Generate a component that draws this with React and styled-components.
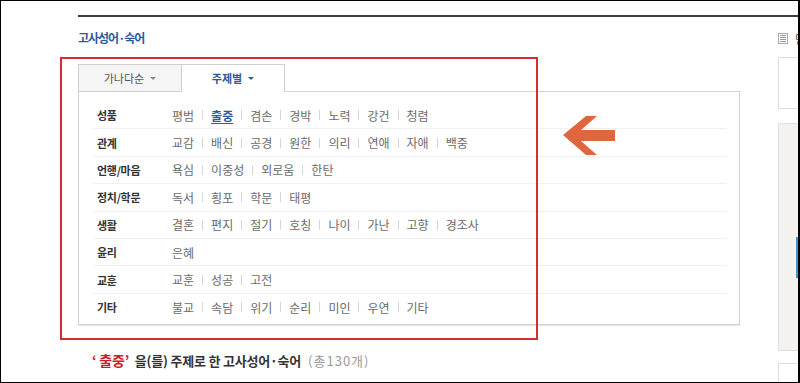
import React from 'react';
import styled, { createGlobalStyle } from 'styled-components';

const GlobalStyle = createGlobalStyle`
  body {
    margin: 0;
    background: #fff;
    font-family: 'Noto Sans CJK KR', 'Noto Sans', sans-serif;
  }
`;

const Frame = styled.div`
  position: relative;
  width: 800px;
  height: 383px;
  box-sizing: border-box;
  border: 1px solid #000;
  border-right-width: 2px;
  overflow: hidden;
  background: #fff;
`;

const TopRule = styled.div`
  margin: 14px 0 0 77px;
  height: 2px;
  background: #3d3d3d;
`;

const Body = styled.div`
  display: flex;
  padding-left: 77px;
`;

const Main = styled.div`
  width: 662px;
  flex-shrink: 0;
`;

const Title = styled.h2`
  margin: 13px 0 0;
  font-size: 12px;
  line-height: 16px;
  font-weight: bold;
  color: #2c5b9c;
  letter-spacing: -1px;
`;

const Tabs = styled.div`
  display: flex;
  margin-top: 18px;
`;

const Tab = styled.div`
  position: relative;
  z-index: ${(p) => (p.$active ? 2 : 1)};
  width: 104px;
  height: 28px;
  box-sizing: border-box;
  display: flex;
  align-items: center;
  justify-content: center;
  gap: 6px;
  border: 1px solid #cfcfcf;
  border-bottom: ${(p) => (p.$active ? '1px solid #fff' : '1px solid #cfcfcf')};
  margin-left: ${(p) => (p.$active ? '-1px' : '0')};
  margin-bottom: -1px;
  background: ${(p) => (p.$active ? '#fff' : '#f5f5f5')};
  color: ${(p) => (p.$active ? '#2c5b9c' : '#555')};
  font-size: 11px;
  font-weight: ${(p) => (p.$active ? 'bold' : 'normal')};

  &:after {
    content: '';
    border-left: 3px solid transparent;
    border-right: 3px solid transparent;
    border-top: 3px solid ${(p) => (p.$active ? '#2c5b9c' : '#888')};
  }
`;

const Panel = styled.div`
  position: relative;
  box-sizing: border-box;
  width: 662px;
  height: 234px;
  padding: 10px 12px 0 14px;
  border: 1px solid #d3d3d3;
  box-shadow: 0 1px 0 #e6e6e6;
`;

const Row = styled.div`
  display: flex;
  align-items: center;
  box-sizing: border-box;
  height: 27.4px;
  padding-left: 4px;
  border-bottom: ${(p) => (p.$last ? 'none' : '1px solid #f0f0f0')};
`;

const Label = styled.div`
  width: 75px;
  flex-shrink: 0;
  font-size: 11px;
  font-weight: bold;
  color: #333;
  letter-spacing: -0.3px;
`;

const Items = styled.div`
  display: flex;
  align-items: center;
`;

const Item = styled.span`
  font-size: 12px;
  color: ${(p) => (p.$current ? '#2c5b9c' : '#6a6a6a')};
  font-weight: ${(p) => (p.$current ? 'bold' : 'normal')};
  text-decoration: ${(p) => (p.$current ? 'underline' : 'none')};
  text-underline-offset: 2px;
  white-space: nowrap;
`;

const Sep = styled.span`
  width: 1px;
  height: 10px;
  margin: 0 8px;
  background: #d6d6d6;
`;

const Summary = styled.p`
  margin: 26px 0 0 14px;
  font-size: 13px;
  line-height: 18px;
  font-weight: bold;
  color: #333;
  letter-spacing: -0.2px;
`;

const Quote = styled.span`
  margin-right: 3px;
  font-size: 14px;
  color: #c8202a;
`;

const Count = styled.span`
  margin-left: 7px;
  font-weight: normal;
  color: #999;
  font-size: 13px;
  letter-spacing: 1px;
`;

const Sidebar = styled.div`
  margin-left: 38px;
  width: 200px;
  flex-shrink: 0;
`;

const SideHead = styled.div`
  display: flex;
  align-items: center;
  gap: 7px;
  margin-top: 16px;
  height: 10px;
  font-size: 12px;
  color: #555;
`;

const ListIcon = styled.span`
  width: 6px;
  height: 7px;
  border: 1px solid #aaa;
  background: repeating-linear-gradient(#fff 0 1px, #999 1px 2px);
  background-clip: content-box;
  padding: 1px;
`;

const SideBox = styled.div`
  box-sizing: border-box;
  height: ${(p) => p.$h}px;
  margin-top: ${(p) => p.$mt}px;
  border: 1px solid #dedede;
  background: ${(p) => p.$bg || '#fff'};
  position: relative;
`;

const SideBar = styled.div`
  margin: 113px 0 0 17px;
  width: 8px;
  height: 41px;
  background: #3b98d4;
`;

const Highlight = styled.div`
  position: absolute;
  left: 59px;
  top: 56px;
  width: 478px;
  height: 283px;
  box-sizing: border-box;
  border: 2px solid #d42d36;
  pointer-events: none;
`;

const Arrow = styled.svg`
  position: absolute;
  left: 560px;
  top: 113px;
`;

const topics = [
  { label: '성품', items: ['평범', '출중', '겸손', '경박', '노력', '강건', '청렴'] },
  { label: '관계', items: ['교감', '배신', '공경', '원한', '의리', '연애', '자애', '백중'] },
  { label: '언행/마음', items: ['욕심', '이중성', '외로움', '한탄'] },
  { label: '정치/학문', items: ['독서', '횡포', '학문', '태평'] },
  { label: '생활', items: ['결혼', '편지', '절기', '호칭', '나이', '가난', '고향', '경조사'] },
  { label: '윤리', items: ['은혜'] },
  { label: '교훈', items: ['교훈', '성공', '고전'] },
  { label: '기타', items: ['불교', '속담', '위기', '순리', '미인', '우연', '기타'] },
];

const current = '출중';

export default function App() {
  return (
    <>
      <GlobalStyle />
      <Frame>
        <TopRule />
        <Body>
          <Main>
            <Title>고사성어·숙어</Title>
            <Tabs>
              <Tab>가나다순</Tab>
              <Tab $active>주제별</Tab>
            </Tabs>
            <Panel>
              {topics.map((t, i) => (
                <Row key={t.label} $last={i === topics.length - 1}>
                  <Label>{t.label}</Label>
                  <Items>
                    {t.items.map((it, j) => (
                      <React.Fragment key={it}>
                        {j > 0 && <Sep />}
                        <Item $current={it === current}>{it}</Item>
                      </React.Fragment>
                    ))}
                  </Items>
                </Row>
              ))}
            </Panel>
            <Summary>
              <Quote>‘&nbsp;출중’</Quote> 을(를) 주제로 한 고사성어·숙어
              <Count>(총130개)</Count>
            </Summary>
          </Main>
          <Sidebar>
            <SideHead>
              <ListIcon />
              <span>단어장</span>
            </SideHead>
            <SideBox $h={52} $mt={14} />
            <SideBox $h={228} $mt={14} $bg="#f4f2ee">
              <SideBar />
            </SideBox>
            <SideBox $h={40} $mt={12} />
          </Sidebar>
        </Body>
        <Highlight />
        <Arrow width="56" height="43" viewBox="0 0 56 43">
          <polygon
            points="2,21 25,2 36,2 20,16 54,16 54,27 20,27 36,41 25,41"
            fill="#e0663f"
          />
        </Arrow>
      </Frame>
    </>
  );
}
